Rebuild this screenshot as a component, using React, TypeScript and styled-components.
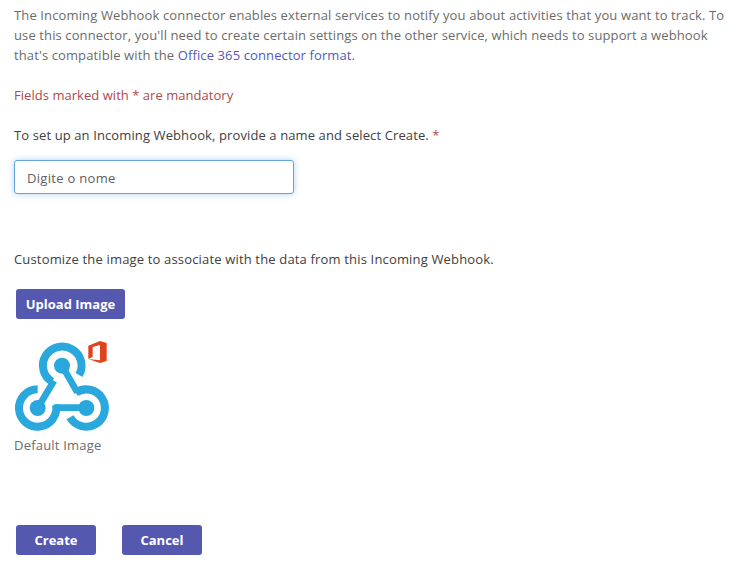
import React from "react";
import styled, { createGlobalStyle } from "styled-components";

const Global = createGlobalStyle`
  * { box-sizing: border-box; }
  body { margin: 0; background: #fff; font-family: "Open Sans", "Noto Sans", sans-serif; font-size: 13px; line-height: 20px; }
`;
const Page = styled.main`
  padding: 5px 0 0 14px;
  height: 563px;
  overflow: hidden;
`;
const Line = styled.div<{ $ls?: number; $tone?: string; $mt?: number }>`
  white-space: nowrap;
  height: 20px;
  color: ${(p) => p.$tone ?? "#6c6b6a"};
  letter-spacing: ${(p) => p.$ls ?? 0}px;
  margin-top: ${(p) => p.$mt ?? 0}px;
`;
const Link = styled.a`
  color: #5558b8;
`;
const Required = styled.span`
  color: #b0484c;
`;
const NameInput = styled.input`
  display: block;
  width: 280px;
  height: 34px;
  margin-top: 15px;
  padding: 2px 12px 0;
  border: 1px solid #66a5da;
  border-radius: 3px;
  outline: none;
  box-shadow: 0 0 6px rgba(102, 175, 233, 0.55);
  font: inherit;
  letter-spacing: 0.3px;
  color: #555;
  &::placeholder { color: #606060; opacity: 1; }
`;
const Button = styled.button<{ $w: number }>`
  width: ${(p) => p.$w}px;
  height: 30px;
  padding: 0;
  border: 0;
  border-radius: 3px;
  background: #5558af;
  color: #fff;
  font: inherit;
  font-weight: 700;
`;
const UploadRow = styled.div`
  margin: 20px 0 0 2px;
  height: 30px;
`;
const Actions = styled.div`
  display: flex;
  gap: 26px;
  margin: 70px 0 0 2px;
`;
const Logo = styled.svg`
  display: block;
  margin-top: 21px;
`;

function WebhookLogo() {
  return (
    <Logo width="96" height="95" viewBox="42 30 288 285" fill="none">
      <g stroke="#2aa8de" strokeWidth="24">
        <path d="M237 135A58 57 0 1 0 156 155" />
        <path d="M113 178A56 56 0 1 0 168 224" />
        <path d="M227 188A56 56 0 1 1 210 262" />
      </g>
      <g stroke="#2aa8de" strokeWidth="20">
        <path d="M113 234L162 152" />
        <path d="M186 107L232 187" />
        <path d="M162 233H259" />
      </g>
      <g fill="#2aa8de">
        <circle cx="186" cy="107" r="24" />
        <circle cx="113" cy="234" r="24" />
        <circle cx="259" cy="234" r="24" />
      </g>
      <path fill="#e0421c" d="M265 47L300 33L320 39V93L300 99L265 87L300 91V45L278 51V81L265 87Z" />
    </Logo>
  );
}

export default function App() {
  return (
    <Page>
      <Global />
      <Line $ls={0.13}>The Incoming Webhook connector enables external services to notify you about activities that you want to track. To</Line>
      <Line $ls={0.115}>use this connector, you'll need to create certain settings on the other service, which needs to support a webhook</Line>
      <Line $ls={0.115}>that's compatible with the <Link>Office 365 connector format</Link>.</Line>
      <Line $mt={20} $ls={0.04} $tone="#b0484c">Fields marked with * are mandatory</Line>
      <Line $mt={20} $ls={0.11} $tone="#404040">To set up an Incoming Webhook, provide a name and select Create. <Required>*</Required></Line>
      <NameInput placeholder="Digite o nome" />
      <Line $mt={55} $ls={0.165} $tone="#404040">Customize the image to associate with the data from this Incoming Webhook.</Line>
      <UploadRow><Button $w={109}>Upload Image</Button></UploadRow>
      <WebhookLogo />
      <Line $ls={0.2}>Default Image</Line>
      <Actions><Button $w={80}>Create</Button><Button $w={80}>Cancel</Button></Actions>
    </Page>
  );
}
